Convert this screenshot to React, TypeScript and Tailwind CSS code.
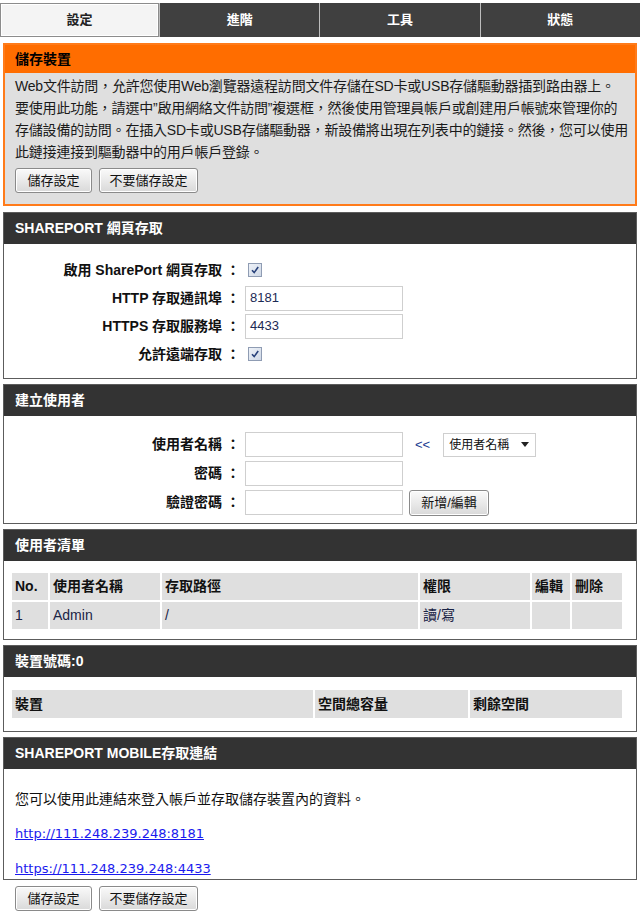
import React from 'react';

const font = { fontFamily: '"Liberation Sans", "Noto Sans CJK TC", sans-serif' };

function Btn({ children, className = '' }: { children: React.ReactNode; className?: string }) {
  return (
    <button
      className={`h-[25px] whitespace-nowrap rounded-[3px] border border-[#8a8a8a] bg-gradient-to-b from-[#fafafa] to-[#d9d9d9] px-0 text-[13px] leading-[23px] text-[#111] shadow-[inset_0_0_0_1px_#fff] ${className}`}
    >
      {children}
    </button>
  );
}

function Check() {
  return (
    <span className="flex h-[14px] w-[14px] items-center justify-center border border-[#8f9cb3] bg-gradient-to-br from-[#eef2f8] to-[#cfd8e6]">
      <svg viewBox="0 0 10 10" className="h-[10px] w-[10px]">
        <path d="M2 5.2 L4.2 7.6 L8.2 2" fill="none" stroke="#27407a" strokeWidth="1.6" />
      </svg>
    </span>
  );
}

function Section({ title, children }: { title: React.ReactNode; children: React.ReactNode }) {
  return (
    <div className="mx-[3px] border border-[#5c5c5c]">
      <div className="flex h-[31px] items-center bg-[#333333] px-[11px] text-[14px] font-bold text-white">
        {title}
      </div>
      <div className="bg-white">{children}</div>
    </div>
  );
}

function Row({ label, children, h = 'h-[28px]' }: { label: string; children: React.ReactNode; h?: string }) {
  return (
    <div className={`flex items-center ${h}`}>
      <div className="w-[236px] whitespace-nowrap text-right text-[14px] font-bold text-[#111]">{label}</div>
      <div className="ml-[5px] flex items-center">{children}</div>
    </div>
  );
}

function Input({ value = '' }: { value?: string }) {
  return (
    <div className="flex h-[25px] w-[158px] items-center border border-[#cfcfcf] bg-white px-[4px] text-[13px] text-[#1c2a55]">
      {value}
    </div>
  );
}

const th = 'bg-[#dfdfdf] px-[3px] text-left text-[14px] font-bold text-[#111] h-[27px] whitespace-nowrap';
const td = 'bg-[#dfdfdf] px-[3px] text-left text-[14px] text-[#1a2446] h-[27px]';
const linkFont = { fontFamily: '"DejaVu Sans", sans-serif' };

export default function App() {
  return (
    <div className="min-h-[917px] w-[640px] bg-white text-[#111]" style={font}>
      {/* tabs */}
      <div className="flex h-[37px] pt-[3px]">
        <div className="flex w-[159px] items-center justify-center border border-[#8c8c8c] bg-[#f4f4f4] text-[13px] font-bold text-[#222] shadow-[inset_0_0_0_1px_#fff]">
          設定
        </div>
        <div className="flex flex-1 items-center justify-center border-l border-[#bdbdbd] bg-[#404040] text-[13px] font-bold text-white">
          進階
        </div>
        <div className="flex flex-1 items-center justify-center border-l border-[#bdbdbd] bg-[#404040] text-[13px] font-bold text-white">
          工具
        </div>
        <div className="flex flex-1 items-center justify-center border-l border-[#bdbdbd] bg-[#404040] text-[13px] font-bold text-white">
          狀態
        </div>
      </div>

      {/* orange intro */}
      <div className="mx-[3px] mt-[6px] border-2 border-[#ff7b1a]">
        <div className="flex h-[28px] items-center bg-[#ff6d00] px-[10px] text-[14px] font-bold text-black">
          儲存裝置
        </div>
        <div className="bg-[#dfdfdf] px-[10px] pb-[11px] pt-[2px]">
          <div className="whitespace-nowrap text-[14px] leading-[22px] tracking-[-0.2px] text-[#1a1a1a]">
            <div>Web文件訪問，允許您使用Web瀏覽器遠程訪問文件存儲在SD卡或USB存儲驅動器插到路由器上。</div>
            <div>要使用此功能，請選中”啟用網絡文件訪問”複選框，然後使用管理員帳戶或創建用戶帳號來管理你的</div>
            <div>存儲設備的訪問。在插入SD卡或USB存儲驅動器，新設備將出現在列表中的鏈接。然後，您可以使用</div>
            <div>此鏈接連接到驅動器中的用戶帳戶登錄。</div>
          </div>
          <div className="mt-[5px] flex gap-[7px]">
            <Btn className="w-[77px]">儲存設定</Btn>
            <Btn className="w-[99px]">不要儲存設定</Btn>
          </div>
        </div>
      </div>

      <div className="mt-[6px] flex flex-col gap-[5px]">
        <Section title="SHAREPORT 網頁存取">
          <div className="pb-[10px] pt-[12px]">
            <Row label="啟用 SharePort 網頁存取 ：">
              <span className="ml-[3px]">
                <Check />
              </span>
            </Row>
            <Row label="HTTP 存取通訊埠 ：">
              <Input value="8181" />
            </Row>
            <Row label="HTTPS 存取服務埠 ：">
              <Input value="4433" />
            </Row>
            <Row label="允許遠端存取 ：">
              <span className="ml-[3px]">
                <Check />
              </span>
            </Row>
          </div>
        </Section>

        <Section title="建立使用者">
          <div className="pb-[6px] pt-[14px]">
            <Row label="使用者名稱 ：" h="h-[29px]">
              <Input />
              <span className="ml-[12px] text-[13px] text-[#1a3a8f]">&lt;&lt;</span>
              <div className="ml-[13px] flex h-[24px] w-[93px] items-center justify-between border border-[#cfcfcf] bg-white pl-[5px] pr-[6px] text-[12px] text-[#111]">
                <span>使用者名稱</span>
                <svg viewBox="0 0 8 5" className="h-[5px] w-[8px]">
                  <path d="M0 0 H8 L4 5 Z" fill="#222" />
                </svg>
              </div>
            </Row>
            <Row label="密碼 ：" h="h-[29px]">
              <Input />
            </Row>
            <Row label="驗證密碼 ：" h="h-[29px]">
              <Input />
              <Btn className="ml-[6px] h-[26px] w-[80px]">新增/編輯</Btn>
            </Row>
          </div>
        </Section>

        <Section title="使用者清單">
          <div className="pb-[8px] pl-[6px] pr-[12px] pt-[10px]">
            <table className="w-full border-separate border-spacing-[2px]">
              <thead>
                <tr>
                  <th className={`${th} w-[36px]`}>No.</th>
                  <th className={`${th} w-[110px]`}>使用者名稱</th>
                  <th className={`${th} w-[256px]`}>存取路徑</th>
                  <th className={`${th} w-[110px]`}>權限</th>
                  <th className={`${th} w-[38px]`}>編輯</th>
                  <th className={th}>刪除</th>
                </tr>
              </thead>
              <tbody>
                <tr>
                  <td className={td}>1</td>
                  <td className={td}>Admin</td>
                  <td className={td}>/</td>
                  <td className={td}>讀/寫</td>
                  <td className={td}></td>
                  <td className={td}></td>
                </tr>
              </tbody>
            </table>
          </div>
        </Section>

        <Section title="裝置號碼:0">
          <div className="pb-[11px] pl-[6px] pr-[12px] pt-[11px]">
            <table className="w-full border-separate border-spacing-[2px]">
              <thead>
                <tr>
                  <th className={`${th} h-[28px] w-[301px]`}>裝置</th>
                  <th className={`${th} h-[28px] w-[153px]`}>空間總容量</th>
                  <th className={`${th} h-[28px]`}>剩餘空間</th>
                </tr>
              </thead>
            </table>
          </div>
        </Section>

        <Section title="SHAREPORT MOBILE存取連結">
          <div className="px-[11px] pt-[20px] text-[14px] leading-[20px]">
            <p className="text-[#111]">您可以使用此連結來登入帳戶並存取儲存裝置內的資料。</p>
            <p className="mt-[14px]">
              <a href="#" className="text-[13px] text-[#1a1aee] underline" style={linkFont}>
                http://111.248.239.248:8181
              </a>
            </p>
            <p className="mt-[14px]">
              <a href="#" className="text-[13px] text-[#1a1aee] underline" style={linkFont}>
                https://111.248.239.248:4433
              </a>
            </p>
          </div>
        </Section>
      </div>

      <div className="ml-[15px] mt-[6px] flex gap-[7px]">
        <Btn className="w-[77px]">儲存設定</Btn>
        <Btn className="w-[99px]">不要儲存設定</Btn>
      </div>
    </div>
  );
}
